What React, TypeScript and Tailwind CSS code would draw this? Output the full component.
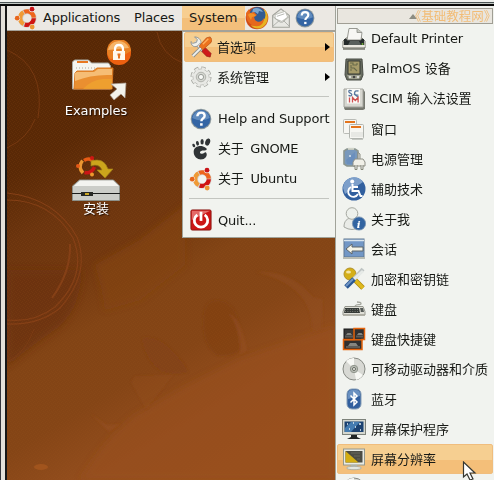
import React from 'react';

type IconProps = { size?: number };
type G = React.ReactNode;

const Svg = ({ size = 24, children }: { size?: number; children: G }) => (
  <svg width={size} height={size} viewBox="0 0 24 24" className="block shrink-0">{children}</svg>
);

const UbuntuIcon = ({ size = 24 }: IconProps) => (
  <Svg size={size}>
    <circle cx="13.3" cy="12.3" r="6.8" fill="none" stroke="#b9aaa0" strokeWidth="5" opacity=".5" />
    <g fill="none" strokeWidth="4.2">
      <path d="M10.2 5.9A6.8 6.8 0 0 1 19.8 11.6" stroke="#ee641c" />
      <path d="M19.8 12.2A6.8 6.8 0 0 1 10.7 18.4" stroke="#d01412" />
      <path d="M9.7 18A6.8 6.8 0 0 1 9.4 6.2" stroke="#f09a35" />
    </g>
    <circle cx="3.2" cy="12.2" r="2.9" fill="#f1eeea" /><circle cx="18" cy="3.3" r="2.9" fill="#f1eeea" /><circle cx="18.2" cy="20.9" r="2.9" fill="#f1eeea" />
    <circle cx="3.2" cy="12.2" r="2.4" fill="#e8661c" />
    <circle cx="18" cy="3.2" r="2.4" fill="#c91518" />
    <circle cx="18.2" cy="21" r="2.4" fill="#ec9534" />
  </Svg>
);

const FirefoxIcon = () => (
  <Svg>
    <circle cx="12" cy="12" r="11.3" fill="#ce4b18" />
    <path d="M19 3c5 4 5 13 0 17-4 4-11 3-13-1 6 2 12-1 13-16z" fill="#e7b321" />
    <circle cx="12.5" cy="9" r="8" fill="#315b91" />
    <path d="M8 3c3-2 8-1 10 3l-4-1-1 3-3-2-3 1z" fill="#7ba6cf" />
    <path d="M1 7l3-4 1 4 4-1 3 3-3 2 1 3c3 3 7 2 9-2 0 6-4 9-9 8-6-1-9-6-9-13z" fill="#e6681d" />
    <path d="M3 9c1-2 4-2 6-1l2 2-4 1-1 3z" fill="#f09229" />
  </Svg>
);

const MailIcon = () => (
  <Svg size={20}>
    <path d="M2 9L12 1l10 8v14H2z" fill="#e8e8e3" stroke="#a1a29b" strokeWidth="1.3" />
    <path d="M5 8l12-4 3 7-7 5-8-3z" fill="#fff" stroke="#b7b8b0" />
    <path d="M2 10l9 7h3l8-7M2 22l8-7m12 7l-7-7M7 10l9-3" fill="none" stroke="#a7a8a2" />
  </Svg>
);

const HelpIcon = ({ size = 20 }: IconProps) => (
  <Svg size={size}>
    <circle cx="12" cy="12" r="11.3" fill="#8e9a9e" />
    <circle cx="12" cy="12" r="10.2" fill="#3465a4" />
    <path d="M2.5 11A9.6 9.6 0 0 1 21.5 11Q12 16 2.5 11" fill="#618cbe" />
    <path d="M8 9q.3-4 4.2-4Q16 5 16 8.4c0 3-3.6 3-3.6 6" fill="none" stroke="#fff" strokeWidth="2.6" />
    <rect x="11" y="16.6" width="2.8" height="2.7" fill="#fff" />
  </Svg>
);

const ToolsIcon = () => (
  <Svg size={22}>
    <path d="M6 6l9 10" stroke="#8f9390" strokeWidth="5.5" />
    <path d="M6 6l9 10" stroke="#eceeec" strokeWidth="3.8" />
    <path d="M5 1l3 3-1 3-4 1-2-2c0 4 3 7 7 5l4-4C12 4 9 1 5 1z" fill="#eef0ee" stroke="#8d908e" />
    <path d="M14 15l3-2 6 6-1 4-4-1-5-5z" fill="#cf191b" stroke="#8c1710" strokeWidth=".7" />
    <path d="M13 12L3 22" stroke="#8d908c" strokeWidth="4" />
    <path d="M13 12L3 22" stroke="#eff0ed" strokeWidth="2" />
    <path d="M10 11l8-9 4-1 2 3-1 3-9 8z" fill="#ed721d" stroke="#ad4a13" strokeWidth=".7" />
    <path d="M14 9l6-6" stroke="#ffaf5c" strokeWidth="1.5" />
  </Svg>
);

const GearIcon = () => (
  <Svg size={22}>
    <circle cx="12" cy="12" r="9.5" fill="none" stroke="#a5a7a1" strokeWidth="4" strokeDasharray="4.5 2.96" />
    <circle cx="12" cy="12" r="8.8" fill="#e8e9e5" stroke="#b2b4ae" strokeWidth=".8" />
    <circle cx="12" cy="12" r="9.3" fill="none" stroke="#e8e9e5" strokeWidth="2.6" strokeDasharray="3.7 3.604" strokeDashoffset="-.4" />
    <circle cx="12" cy="12" r="5.2" fill="#d6d8d2" stroke="#adafa9" />
    <circle cx="12" cy="12" r="2.8" fill="#f8f9f6" stroke="#92958f" />
  </Svg>
);

const FootIcon = () => (
  <Svg size={22}>
    <g fill="#303436">
      <ellipse cx="19.4" cy="4.3" rx="2.6" ry="4" transform="rotate(18 19 4)" />
      <ellipse cx="13.2" cy="4.2" rx="1.8" ry="3" />
      <ellipse cx="8.2" cy="5.8" rx="1.6" ry="2.6" transform="rotate(-12 8 6)" />
      <ellipse cx="4" cy="8.2" rx="1.4" ry="2.1" transform="rotate(-25 4 8)" />
      <path d="M17 10.5C12 7 4 9 4 15c0 6 5 9 9.5 8.2 4-.7 6-5 4-7.5-1.8-.6-2.3 2-5 1.5-3-.8-1.5-3.6 2-3.600 4.500 0 4.500-2 2.500-3.100z" />
    </g>
  </Svg>
);

const PowerIcon = () => (
  <Svg size={22}>
    <rect x="1" y="1" width="22" height="22" rx="1.5" fill="#cc1515" stroke="#881612" />
    <path d="M2 2h20L2 12z" fill="#e46a68" />
    <path d="M8 6.5a7.3 7.3 0 1 0 8 0" fill="none" stroke="#fff" strokeWidth="3" />
    <path d="M12 3v10" stroke="#fff" strokeWidth="3" />
  </Svg>
);

const PrinterIcon = () => (
  <Svg>
    <path d="M4 11h16l3 3v7H1v-7z" fill="#dddcd2" stroke="#74746c" />
    <path d="M2 12h20v6H2z" fill="#252b2b" />
    <path d="M5 13L7 1.500h8l5 4L19 13z" fill="#f7f7f4" stroke="#80827a" strokeWidth=".8" />
    <path d="M15 1.500v4h5" fill="#c8cac2" stroke="#8b8d86" strokeWidth=".8" />
    <path d="M8 14h9l2 4H6z" fill="#5a605d" /><path d="M1 19h22" stroke="#efeee6" strokeWidth="1.500" /><path d="M1 22h22" stroke="#77786f" strokeWidth="1.500" />
    <circle cx="20.500" cy="17" r="1" fill="#70ae37" />
  </Svg>
);

const PalmIcon = () => (
  <Svg>
    <path d="M4 2h16l1 16-2 5H5l-2-5z" fill="#686d61" stroke="#494c44" />
    <path d="M6 4h12v13H6z" fill="#a69b69" stroke="#343832" />
    <path d="M8 6h3v2h4M9 8v3h3l3 3M15 6v2M8 13h2" fill="none" stroke="#686a4a" strokeWidth="1.1" />
    <path d="M5 18h14l-2 4H7z" fill="#9fa18f" />
    <circle cx="8" cy="20" r="1" fill="#eee" /><circle cx="12" cy="20" r="1.3" fill="#444" /><circle cx="16" cy="20" r="1" fill="#eee" />
  </Svg>
);

const ScimIcon = () => (
  <Svg>
    <path d="M2 2h19l2 3v17l-2 1H3l-1-2z" fill="#777970" />
    <path d="M2 2h19v18H2z" fill="#d7d7d0" stroke="#a2a39c" />
    <path d="M5 2h13v14.500H5z" fill="#fafaf7" />
    <path d="M9.800 4q-3-1.500-3 .6c0 1.800 3 1.200 3 3.200q-.5 1.800-3.300.5M16.500 4q-4-1-4 2.500 1 2.500 4 1.500M12 7l4 3" fill="none" stroke="#58779e" strokeWidth="1.300" />
    <path d="M7.500 10.500v5M10.500 15.500v-5l2.800 3 2.800-3v5" fill="none" stroke="#cf5151" strokeWidth="1.300" />
  </Svg>
);

const WindowsIcon = () => (
  <Svg>
    <rect x="1.500" y="2.500" width="13" height="14" rx="1" fill="#f6f6f2" stroke="#b9bbb6" />
    <path d="M3 5h10" stroke="#e4741c" strokeWidth="2" />
    <rect x="7.500" y="7.500" width="14" height="14" rx="1" fill="#f6f6f2" stroke="#b1b4af" />
    <path d="M9 10h10" stroke="#e4741c" strokeWidth="2" /><path d="M9 15h12v5H9z" fill="#e7e8e4" />
    <path d="M10 22.500h11" stroke="#c4c7c2" />
  </Svg>
);

const BatteryIcon = () => (
  <Svg>
    <path d="M2 4l3-2h8l3 2v14l-3 1H5l-3-2z" fill="#7898bc" stroke="#8b958f" strokeWidth="1.600" />
    <path d="M6 .8h6v2H6z" fill="#d1d4c9" /><path d="M4 13L13 5v12H5z" fill="#6b8fbd" /><circle cx="8" cy="9" r="1" fill="#dbe6ef" />
    <path d="M16 12V5.500l2 1.500v5" fill="#ddd" stroke="#8b8d82" />
    <path d="M11 15l2-3h8l2 3v4H11z" fill="#f1f0e8" stroke="#8f9087" />
    <path d="M13 18v4.500h2V18m4 0v4.500h2V18" fill="#eee" stroke="#858779" />
  </Svg>
);

const AccessIcon = () => (
  <Svg>
    <circle cx="12" cy="12" r="11.500" fill="#315f9e" /><path d="M1 11A11 11 0 0 1 21 5L3 17z" fill="#7d9fca" />
    <circle cx="10.200" cy="4.500" r="2" fill="#fff" />
    <path d="M10.500 7v7h6l2 5h2M11 10h5" fill="none" stroke="#fff" strokeWidth="2" />
    <path d="M9 10a5.200 5.200 0 1 0 7 7" fill="none" stroke="#fff" strokeWidth="1.800" />
  </Svg>
);

const PersonIcon = () => (
  <Svg>
    <path d="M2 20c0-6 3-9 8-9s8 3 8 9q-8 5-16 0z" fill="#e9ebe7" stroke="#a4a7a1" />
    <circle cx="10" cy="6.500" r="5.800" fill="#edf0eb" stroke="#a5a8a0" />
    <circle cx="17" cy="16.500" r="6.600" fill="#3264a1" stroke="#7893b0" strokeWidth=".8" />
    <text x="14.700" y="20.500" fontFamily="DejaVu Serif" fontStyle="italic" fontWeight="bold" fontSize="10" fill="#fff">i</text>
  </Svg>
);

const SessionIcon = () => (
  <Svg>
    <rect x="2" y="2" width="20" height="18" fill="#7297c6" stroke="#5e7790" />
    <path d="M2 3.500h20" stroke="#d9e4ed" strokeWidth="1.500" />
    <path d="M4 12l6-5v3h11v4H10v3z" fill="#f4f3e7" stroke="#5d6568" />
    <path d="M1 21h22" stroke="#b9bcb3" strokeWidth="2" />
  </Svg>
);

const KeysIcon = () => (
  <Svg>
    <path d="M8 8l13 13" stroke="#ad8710" strokeWidth="5" />
    <path d="M8 8l13 13" stroke="#dfb91c" strokeWidth="3.500" />
    <circle cx="8" cy="7" r="6" fill="#d4af18" stroke="#b2922a" /><ellipse cx="6.500" cy="5" rx="2.500" ry="1.500" fill="#f4e4a5" />
    <path d="M21 2L11 13" stroke="#bec4c3" strokeWidth="4" /><path d="M20 3l2 2-9 8-3 1 1-3z" fill="#e6eae7" />
    <path d="M12 12L4 20" stroke="#295794" strokeWidth="5" /><path d="M11 12l-7 7" stroke="#7195c3" strokeWidth="2" />
  </Svg>
);

const KeyboardIcon = () => (
  <Svg>
    <path d="M13 9c2-3 6 0 6-2.500q0-1.500-4-1.500" fill="none" stroke="#a4a69d" strokeWidth="1.300" />
    <path d="M3 9.500h18l2 5v3.500H1v-3.500z" fill="#dfdfd7" stroke="#95978e" />
    <path d="M3 11h14l1 5H2z" fill="#363b38" /><path d="M18 11h3l1 4h-3z" fill="#555a57" />
    <path d="M3 12.500h16M3 14.500h16" stroke="#8a8c84" strokeDasharray="1 1.400" strokeWidth=".8" />
    <path d="M1 18h22" stroke="#aaa99e" strokeWidth="1.500" />
  </Svg>
);

const ShortcutIcon = () => (
  <Svg>
    <rect x="2" y="2" width="10" height="10" fill="#383938" stroke="#171717" />
    <path d="M12 1.500h10.500v11H20v10H1.500v-10H12z" fill="#303030" stroke="#e5640d" strokeWidth="1.500" />
    <path d="M1.500 12.800H21" stroke="#e5640d" strokeWidth="1.400" />
    <path d="M3 9.500h8M14 9.500h7M4 20h14" stroke="#5d5c58" strokeWidth="2" />
    <path d="M4 8l1.500-2h3L10 8M15 8l1.500-2h3L21 8M6 19l2-3h6l2 3" fill="#85857f" />
  </Svg>
);

const DiscIcon = () => (
  <Svg>
    <circle cx="12" cy="12" r="11" fill="#d8d9d4" stroke="#868983" />
    <path d="M12 12L4 4a11 11 0 0 1 8-3zM12 12l9 6a11 11 0 0 1-7 5z" fill="#f7f8f4" />
    <circle cx="12" cy="12" r="3.700" fill="#b9bdb5" stroke="#90958c" />
    <circle cx="12" cy="12" r="1.500" fill="#f7f8f4" stroke="#656961" />
  </Svg>
);

const BluetoothIcon = () => (
  <Svg>
    <rect x="5" y="2" width="14" height="20" rx="5" fill="#315f9e" stroke="#879eb6" />
    <path d="M6 12V7q0-4 4-4h4q4 0 4 4v2z" fill="#6a91c1" />
    <path d="M8.500 8.500l6.500 6.500-3 3V6l3 3-6.500 6.500" fill="none" stroke="#fff" strokeWidth="1.500" />
  </Svg>
);

const SaverIcon = () => (
  <Svg>
    <rect x=".5" y="2.500" width="23" height="15" fill="#d5d8d0" stroke="#7d827b" />
    <rect x="2.500" y="4.500" width="19" height="10.500" fill="#1b4271" />
    <path d="M3 11l6-6h9l-9 10H3z" fill="#447cb1" />
    <path d="M5 7h1M11 6h1M17 7h2M7 12h1M13 10h1M18 13h1" stroke="#e4edf0" strokeWidth="1.500" />
    <path d="M9 18h6v2l4 2H5l4-2z" fill="#202525" />
  </Svg>
);

const ResolutionIcon = () => (
  <Svg>
    <rect x="1.500" y="2" width="21" height="16" fill="#e8eae4" stroke="#93988f" />
    <rect x="3.500" y="4" width="17" height="11.500" fill="#4c4c45" />
    <path d="M3.500 4l13 11.500h-13z" fill="#d4ae13" /><path d="M9 6h9M12 9h6M15 12h3" stroke="#68685c" />
    <path d="M9 18h6v2H9z" fill="#b1b5ad" /><ellipse cx="12" cy="21" rx="7.500" ry="1.700" fill="#e3e6df" stroke="#9ca198" strokeWidth=".7" />
  </Svg>
);

const LATIN_CJK = "font-['DejaVu_Sans','Noto_Sans_CJK_SC',sans-serif]";

const Wallpaper = () => (
  <svg className="absolute inset-0" width="328" height="449" viewBox="7 31 328 449">
    <defs>
      <linearGradient id="base" gradientUnits="userSpaceOnUse" x1="35" y1="30" x2="275" y2="440">
        <stop offset="0" stopColor="#562705" /><stop offset=".24" stopColor="#5a2906" /><stop offset=".36" stopColor="#6b340e" />
        <stop offset=".48" stopColor="#72380f" /><stop offset=".6" stopColor="#824415" /><stop offset=".74" stopColor="#854516" />
        <stop offset=".88" stopColor="#944e1e" /><stop offset="1" stopColor="#99501c" />
      </linearGradient>
      <filter id="soft"><feGaussianBlur stdDeviation="3" /></filter>
      <filter id="edge"><feGaussianBlur stdDeviation="1" /></filter>
      <pattern id="dither" width="4" height="4" patternUnits="userSpaceOnUse">
        <path d="M0 0h1v1H0zM2 1h1v1H2zM1 2h1v1H1zM3 3h1v1H3z" fill="#a35b21" opacity=".13" />
      </pattern>
    </defs>
    <rect x="7" y="31" width="328" height="449" fill="url(#base)" />
    <g filter="url(#soft)">
      <path d="M95 265l45-25 45-35v60l-45 35-35 10q-3-25-10-45z" fill="#824415" opacity=".7" />
      <path d="M7 270h75q-2 45-30 62-18 12-45 34z" fill="#6b330d" opacity=".75" />
      <path d="M187 385l55-27 93-32v154H80q25-42 55-65z" fill="#97501e" opacity=".6" />
    </g>
    <g filter="url(#edge)">
      <path d="M142 338q17-3 31 14 11 10 15 20-12 4-27-1-16-11-19-33z" fill="#824215" opacity=".8" />
      <path d="M204 311q3-11 14-11 12 2 18 13 5 15 6 36-12 9-26 6-16-13-12-44z" fill="#824215" opacity=".75" />
      <path d="M229 314q12 3 18 37l-7 3q-1-29-11-40z" fill="#954f22" opacity=".55" />
      <path d="M256 272q35-2 57 25l10 2-1 30-10 3q2-45-56-60z" fill="#924d20" opacity=".45" />
      <path d="M131 382l15 27 27-34-38 1z" fill="#964f21" opacity=".3" />
      <path d="M91 414l18 18 12-8-14 1z" fill="#9a5223" opacity=".4" />
    </g>
    <g fill="none" stroke="#843f16">
      <path d="M7 193q48 5 70 44 14 36-17 71-20 17-53 16" strokeWidth="1.200" />
      <path d="M7 200q44 0 66 38 15 37-18 69-21 16-48 13" strokeWidth="1.200" />
      <path d="M70 244q1 28-18 54" strokeWidth="2" />
      <path d="M7 148q21-10 28-29M7 50q39 17 31 68M157 32q4 23 26 31" strokeWidth="1" opacity=".65" />
      <path d="M7 362q18-8 27-33" strokeWidth="1" opacity=".5" />
    </g>
    <ellipse cx="41" cy="467" rx="7" ry="3" fill="#a1541d" />
    <rect x="7" y="31" width="328" height="449" fill="url(#dither)" />
  </svg>
);

const ExamplesIcon = () => (
  <svg width="64" height="62" viewBox="68 40 64 62" className="block">
    <path d="M72.500 89V62l2-2h14l3 3h17l2 3v23z" fill="#f5f5ef" stroke="#a9aaa3" />
    <path d="M77 62h11" stroke="#e87820" strokeWidth="2" />
    <path d="M76 68h20" stroke="#aaa79d" strokeDasharray="1 2" />
    <path d="M74 89l1-16 2-2h16l4-3h16l-1 21z" fill="#ea8f30" stroke="#d97823" />
    <path d="M75 81V73l2-1h17l4-3h14v6q-20-1-37 6z" fill="#f6bd75" />
    <path d="M83 89q8-9 20-10h9v10z" fill="#efa230" opacity=".8" />
    <circle cx="119" cy="53" r="12" fill="#ed6010" />
    <path d="M107 51a12 12 0 0 1 24 0q-12 8-21 8-3-4-3-8z" fill="#e98124" /><path d="M108 50a11 11 0 0 1 21-2z" fill="#f6b468" />
    <path d="M115 52v-2.500q0-4.500 4-4.500t4 4.500V52" fill="none" stroke="#fff" strokeWidth="2.300" />
    <rect x="113" y="51" width="12" height="9" fill="#fff8ec" /><path d="M119 53.500v5m-1.500-4h3" stroke="#e57523" strokeWidth="2" />
    <path d="M111 84l15-1-1 15-4-4-7 6-4-5 7-6z" fill="#f4f3eb" stroke="#aa9f93" strokeWidth=".7" />
  </svg>
);

const InstallIcon = () => (
  <svg width="50" height="48" viewBox="70 154 50 48" className="block">
    <g fill="none" strokeWidth="3.400"><path d="M83 160.500q6-4 11 3" stroke="#e75c15" /><path d="M93.500 167q-3 7-10 5.500" stroke="#ca1515" /><path d="M82 173q-5.500-6-.5-12.500" stroke="#ec9832" /></g>
    <circle cx="77" cy="166" r="2" fill="#e65a18" /><circle cx="91" cy="158" r="2" fill="#cd1713" /><circle cx="91" cy="174.500" r="2" fill="#ed982d" />
    <path d="M90 161q13-4 17 8h5l-8 9-8-8h5q-3-7-11-4z" fill="#cca51c" stroke="#a18018" strokeWidth=".7" />
    <path d="M71.500 186l7-6h34l6 6v14.500h-47z" fill="#cbcdc8" stroke="#8d918a" />
    <path d="M73 186l6-5.500h33l6 5.500z" fill="#f3f4f0" /><path d="M71 193.500h48" stroke="#1b1d1b" />
    <rect x="80" y="192" width="12" height="4" fill="#262925" /><rect x="84" y="193" width="4" height="2" fill="#cba723" />
  </svg>
);

const preferences: { label: string; icon: G; active?: boolean; textClass?: string }[] = [
  { label: 'Default Printer', icon: <PrinterIcon />, textClass: 'pb-[2px] tracking-[-0.2px]' },
  { label: 'PalmOS 设备', icon: <PalmIcon />, textClass: 'pb-[2px] tracking-[-0.05px]' },
  { label: 'SCIM 输入法设置', icon: <ScimIcon />, textClass: 'pb-[2px] tracking-[-0.1px]' },
  { label: '窗口', icon: <WindowsIcon /> },
  { label: '电源管理', icon: <BatteryIcon /> },
  { label: '辅助技术', icon: <AccessIcon /> },
  { label: '关于我', icon: <PersonIcon /> },
  { label: '会话', icon: <SessionIcon /> },
  { label: '加密和密钥链', icon: <KeysIcon /> },
  { label: '键盘', icon: <KeyboardIcon /> },
  { label: '键盘快捷键', icon: <ShortcutIcon /> },
  { label: '可移动驱动器和介质', icon: <DiscIcon /> },
  { label: '蓝牙', icon: <BluetoothIcon /> },
  { label: '屏幕保护程序', icon: <SaverIcon /> },
  { label: '屏幕分辨率', icon: <ResolutionIcon />, active: true },
];

const SystemItem = ({ icon, label, arrow, active, textClass = '' }: { icon: G; label: string; arrow?: boolean; active?: boolean; textClass?: string }) => (
  <div className={`flex h-[30px] shrink-0 items-center ${active ? 'rounded-xs border border-[#f0bd7d] bg-linear-to-b from-[#f6cf91] from-50% to-[#f4bf79] to-50%' : 'border border-transparent'}`}>
    <div className="flex w-[33px] shrink-0 justify-center pr-[1px]">{icon}</div>
    <span className={`whitespace-pre ${textClass}`}>{label}</span>
    {arrow && <span className="ml-auto mr-[3px] h-0 w-0 border-y-4 border-l-[5px] border-y-transparent border-l-black" />}
  </div>
);

export default function App() {
  return (
    <div className={`relative flex h-[480px] w-[494px] flex-col overflow-hidden bg-[#eff1ee] text-[13px] leading-none text-[#171915] ${LATIN_CJK}`}>
      <div className="flex h-[6px] shrink-0 flex-col bg-[#eff1ee]">
        <div className="mt-[2px] h-px bg-[#4c5556]" />
        <div className="h-px bg-[#c2c8c4]" />
        <div className="h-[2px] bg-[#090909]" />
      </div>
      <div className="flex flex-1">
        <div className="w-[7px] shrink-0 border-l border-r-2 border-l-[#35353b] border-r-[#171717] bg-[#e4e1da]" />
        <div className="flex w-[328px] flex-col">
          <header className="flex h-[25px] shrink-0 items-center border-b border-[#a5a198] bg-[#ebe8e3] pl-[7px]">
            <UbuntuIcon size={24} />
            <span className="ml-[5px] w-[91px] pb-[2px] tracking-[-0.2px]">Applications</span>
            <span className="w-[48px] pb-[2px] tracking-[-0.15px]">Places</span>
            <div className="flex h-[24px] w-[63px] items-center bg-linear-to-b from-[#f7ce91] from-50% to-[#f3bf7b] to-50% pb-[2px] pl-[7px]">System</div>
            <FirefoxIcon />
            <div className="ml-[2px]"><MailIcon /></div>
            <div className="ml-[4px]"><HelpIcon /></div>
          </header>
          <main className="relative flex-1 overflow-hidden">
            <Wallpaper />
            <div className="relative flex w-[178px] flex-col items-center pt-[9px] text-white [text-shadow:1px_1px_1px_#201008]">
              <div className="ml-[8px]"><ExamplesIcon /></div>
              <span className="mt-[2px] tracking-[-0.1px]">Examples</span>
              <div className="mt-[37px] mr-[1px]"><InstallIcon /></div>
              <span>安装</span>
            </div>
          </main>
        </div>
      </div>

      <section className="absolute left-[182px] top-[31px] flex h-[207px] w-[154px] flex-col border border-[#a1a39a] bg-[#f1f3ef] px-px">
        <SystemItem icon={<ToolsIcon />} label="首选项" textClass="-ml-px" arrow active />
        <SystemItem icon={<GearIcon />} label="系统管理" textClass="-ml-px" arrow />
        <div className="mx-[5px] mb-[7px] mt-[4px] h-px shrink-0 bg-[#c3c5c0]" />
        <SystemItem icon={<HelpIcon size={22} />} label="Help and Support" textClass="pb-[2px] tracking-[-0.15px]" />
        <SystemItem icon={<FootIcon />} label="关于 GNOME" textClass="pb-[2px] [word-spacing:3px] tracking-[-0.3px]" />
        <SystemItem icon={<UbuntuIcon size={24} />} label="关于 Ubuntu" textClass="pb-[2px] [word-spacing:3px] tracking-[-0.2px]" />
        <div className="mx-[5px] mb-[6px] mt-[4px] h-px shrink-0 bg-[#c3c5c0]" />
        <SystemItem icon={<PowerIcon />} label="Quit..." textClass="tracking-[-0.2px]" />
      </section>

      <section className="absolute left-[335px] top-[6px] flex h-[474px] w-[159px] flex-col overflow-hidden border-l border-[#a1a39a] bg-[#f1f3ef] pt-[2px]">
        <div className="ml-px flex h-[16px] w-[156px] shrink-0 items-center justify-end border border-[#a09e94] bg-[#e9e6df] pr-[2px] text-[#f2bc76]">
          <span className="mr-[-2px] h-0 w-0 border-x-4 border-b-[5px] border-x-transparent border-b-[#8c8c82]" />
          <span className="whitespace-nowrap font-['Noto_Sans_CJK_SC',sans-serif] text-[12.5px] [font-feature-settings:'halt']">《基础教程网》</span>
        </div>
        {preferences.map(item => (
          <div key={item.label} className={`ml-px flex h-[30px] w-[156px] shrink-0 items-center ${item.active ? 'rounded-xs border border-[#f0bd7d] bg-linear-to-b from-[#f6cf91] from-55% to-[#f4bf79] to-55%' : 'border border-transparent'}`}>
            <div className="ml-[4px] mr-[5px]">{item.icon}</div>
            <span className={`whitespace-nowrap ${item.textClass ?? ''}`}>{item.label}</span>
          </div>
        ))}
        <div className="ml-[6px] mt-[3px]"><DiscIcon /></div>
      </section>

      <svg className="absolute left-[462px] top-[461px]" width="15" height="22" viewBox="0 0 15 22">
        <path d="M1.500 1v15l3.500-3 3 6 3-1-3-6h5z" fill="#fff" stroke="#353630" strokeWidth="1.200" />
      </svg>
    </div>
  );
}
